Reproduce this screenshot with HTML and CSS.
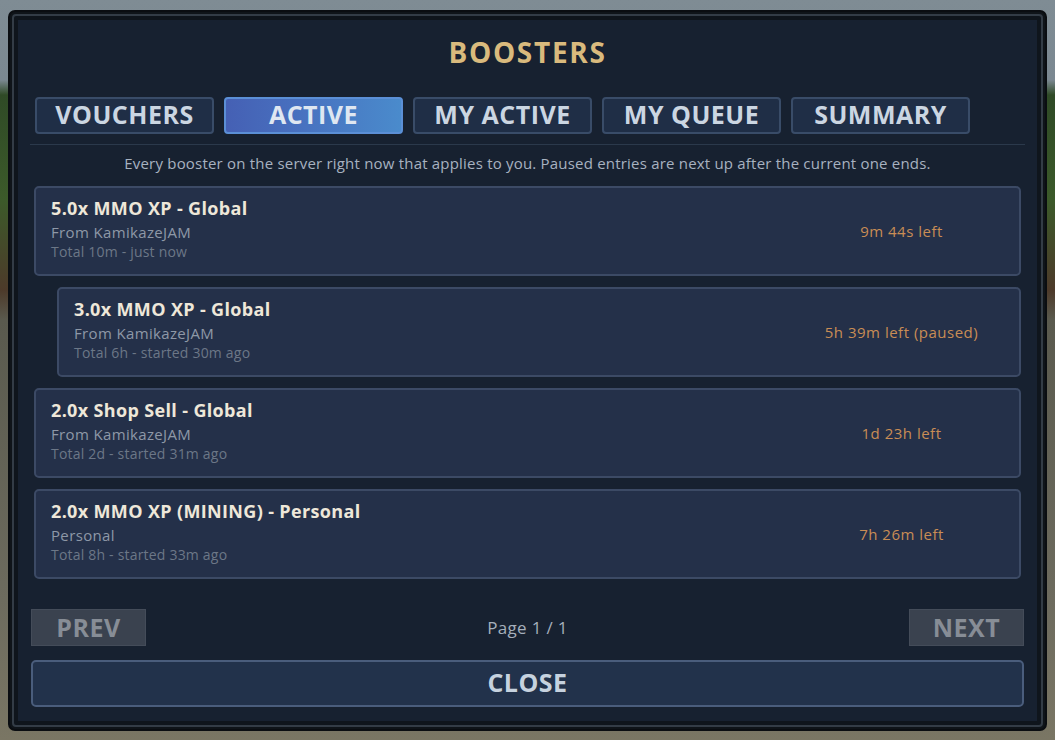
FILE: index.html
```html
<!DOCTYPE html>
<html lang="en">
<head>
<meta charset="utf-8">
<title>Boosters</title>
<link rel="stylesheet" href="styles.css">
</head>
<body>
<div class="scene">
  <div class="frame">
    <div class="bevel">
      <div class="panel">
        <h1 class="title">BOOSTERS</h1>
        <nav class="tabs">
          <button class="tab">VOUCHERS</button>
          <button class="tab tab-active">ACTIVE</button>
          <button class="tab">MY ACTIVE</button>
          <button class="tab">MY QUEUE</button>
          <button class="tab">SUMMARY</button>
        </nav>
        <div class="divider"></div>
        <p class="desc">Every booster on the server right now that applies to you. Paused entries are next up after the current one ends.</p>
        <div class="list">
          <div class="card">
            <div class="info">
              <div class="name">5.0x MMO XP - Global</div>
              <div class="from">From KamikazeJAM</div>
              <div class="meta">Total 10m - just now</div>
            </div>
            <div class="time">9m 44s left</div>
          </div>
          <div class="card card-queued">
            <div class="info">
              <div class="name">3.0x MMO XP - Global</div>
              <div class="from">From KamikazeJAM</div>
              <div class="meta">Total 6h - started 30m ago</div>
            </div>
            <div class="time">5h 39m left (paused)</div>
          </div>
          <div class="card">
            <div class="info">
              <div class="name">2.0x Shop Sell - Global</div>
              <div class="from">From KamikazeJAM</div>
              <div class="meta">Total 2d - started 31m ago</div>
            </div>
            <div class="time">1d 23h left</div>
          </div>
          <div class="card">
            <div class="info">
              <div class="name">2.0x MMO XP (MINING) - Personal</div>
              <div class="from">Personal</div>
              <div class="meta">Total 8h - started 33m ago</div>
            </div>
            <div class="time">7h 26m left</div>
          </div>
        </div>
        <div class="pager">
          <button class="page-btn">PREV</button>
          <span class="page-label">Page 1 / 1</span>
          <button class="page-btn">NEXT</button>
        </div>
        <button class="close">CLOSE</button>
      </div>
    </div>
  </div>
</div>
</body>
</html>
```
FILE: styles.css
```css
* { box-sizing: border-box; }
html, body { margin: 0; padding: 0; }
body {
  width: 1055px;
  height: 740px;
  overflow: hidden;
  font-family: "Open Sans", "Noto Sans", sans-serif;
  background: linear-gradient(to bottom, #7f8c94 0, #7b8891 80px, #2f4a26 95px, #3c5a2a 200px, #4d3a2a 290px, #5a5a4e 320px, #6d6b5e 600px, #7a7664 740px);
}
.scene {
  padding: 10px 8px 9px 8px;
  height: 740px;
}
.frame {
  height: 721px;
  background: #0f1419;
  border: 2px solid #0a0d11;
  border-radius: 7px;
  padding: 2px;
}
.bevel {
  height: 100%;
  border: 2px solid #333c46;
  border-radius: 4px;
  background: #0f151c;
  padding: 4px;
}
.panel {
  height: 100%;
  background: #172130;
  padding: 0 13px 11px;
  display: flex;
  flex-direction: column;
}
.title {
  margin: 17px 0 0;
  text-align: center;
  font-size: 28px;
  line-height: 30px;
  font-weight: 700;
  color: #d9ba7d;
  letter-spacing: 1.7px;
}
.tabs {
  margin: 30px 0 0 4px;
  display: flex;
  gap: 10px;
}
.tab {
  width: 179px;
  height: 37px;
  padding: 0 0 2px;
  font-family: inherit;
  font-size: 25px;
  font-weight: 700;
  letter-spacing: 0.5px;
  color: #cbd6e2;
  background: #1f2e46;
  border: 2px solid #394c68;
  border-radius: 4px;
  line-height: 31px;
}
.tab-active {
  background: linear-gradient(to right, #4560b4 0%, #4872c0 45%, #4a8bcc 100%);
  border-color: #5b8fd6;
  color: #dfe7f1;
}
.divider {
  margin-top: 10px;
  height: 1px;
  background: #2b394b;
  margin-left: -1px;
  margin-right: -1px;
}
.desc {
  margin: 8px 0 0;
  text-align: center;
  font-size: 15px;
  line-height: 20px;
  letter-spacing: 0.2px;
  color: #a7b2c0;
}
.list {
  margin: 13px 3px 0;
  display: flex;
  flex-direction: column;
  gap: 11px;
}
.card {
  height: 90px;
  display: flex;
  align-items: center;
  background: #243049;
  border: 2px solid #3c4a65;
  border-radius: 5px;
  padding: 0 0 0 15px;
}
.card-queued { margin-left: 23px; }
.info {
  flex: 1;
  align-self: flex-start;
  padding-top: 9px;
}
.name {
  font-size: 18px;
  line-height: 22px;
  font-weight: 700;
  letter-spacing: 0.35px;
  color: #eee7d9;
}
.from {
  margin-top: 3px;
  font-size: 15px;
  line-height: 20px;
  letter-spacing: 0.35px;
  color: #8e98a7;
}
.meta {
  font-size: 14px;
  line-height: 19px;
  letter-spacing: 0.2px;
  color: #6c7787;
}
.time {
  width: 235px;
  text-align: center;
  font-size: 15px;
  letter-spacing: 0.5px;
  color: #c98d55;
}
.pager {
  margin-top: 30px;
  display: flex;
  align-items: center;
  justify-content: space-between;
}
.page-btn {
  width: 115px;
  height: 37px;
  padding: 0 0 2px;
  font-family: inherit;
  font-size: 25px;
  font-weight: 700;
  letter-spacing: 0.5px;
  color: #878d96;
  background: #3a424f;
  border: 1px solid #444c59;
  border-radius: 0;
}
.page-label {
  font-size: 17px;
  letter-spacing: 0.3px;
  color: #a5afbb;
}
.close {
  margin-top: 14px;
  height: 47px;
  width: 100%;
  font-family: inherit;
  font-size: 25px;
  font-weight: 700;
  letter-spacing: 0.5px;
  color: #c6d2df;
  background: #22324b;
  border: 2px solid #4a5d7c;
  border-radius: 5px;
  padding: 0 0 3px;
}
```
